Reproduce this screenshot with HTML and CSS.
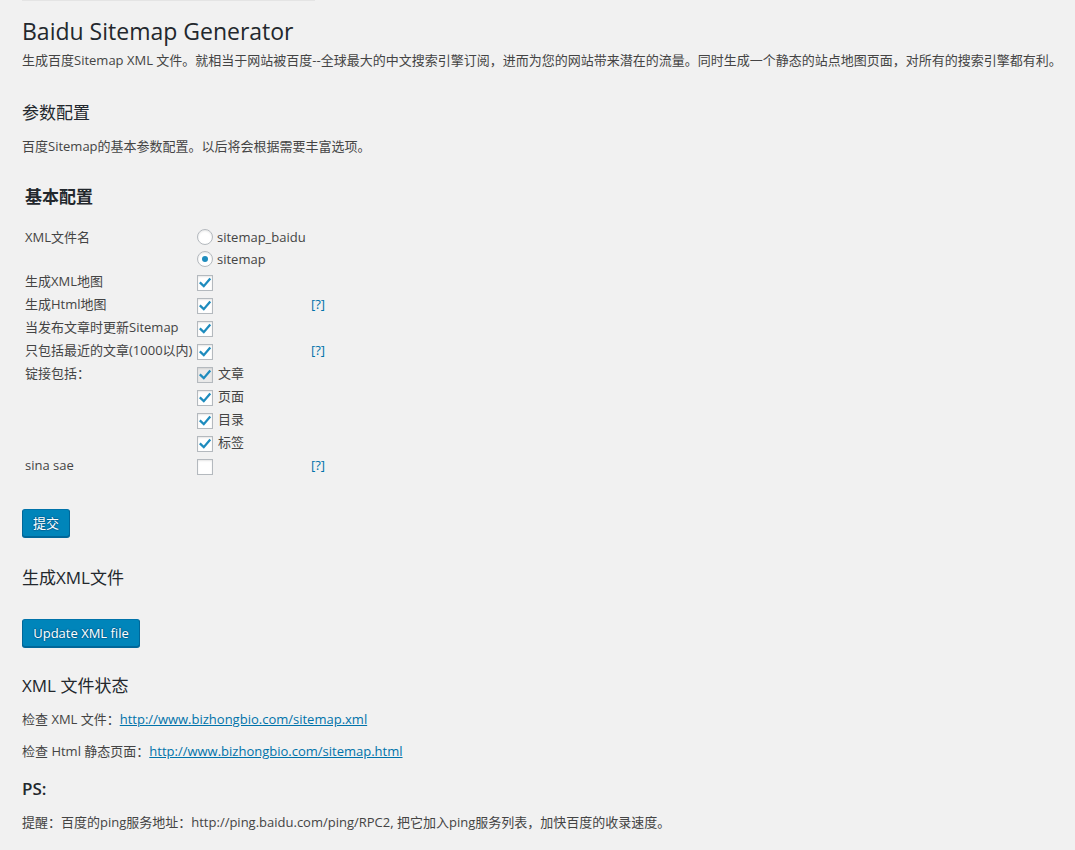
FILE: index.html
```html
<!DOCTYPE html>
<html lang="zh-CN">
<head>
<meta charset="utf-8">
<title>Baidu Sitemap Generator</title>
<link rel="stylesheet" href="styles.css">
</head>
<body>
<div class="notice-edge"></div>
<div class="wrap">
  <h1 class="title">Baidu Sitemap Generator</h1>
  <p class="desc">生成百度Sitemap XML 文件。就相当于网站被百度--全球最大的中文搜索引擎订阅，进而为您的网站带来潜在的流量。同时生成一个静态的站点地图页面，对所有的搜索引擎都有利。</p>

  <h2 class="section first">参数配置</h2>
  <p class="intro">百度Sitemap的基本参数配置。以后将会根据需要丰富选项。</p>

  <h3 class="group">基本配置</h3>

  <div class="form">
    <div class="row">
      <div class="label">XML文件名</div>
      <div class="ctrl">
        <div class="radio-line"><span class="radio"></span><span class="opt">sitemap_baidu</span></div>
        <div class="radio-line"><span class="radio on"></span><span class="opt">sitemap</span></div>
      </div>
      <div class="help"></div>
    </div>
    <div class="row">
      <div class="label">生成XML地图</div>
      <div class="ctrl"><div class="cb-line"><span class="cb checked"><svg viewBox="0 0 16 16"><path d="M3 8.2 L6.6 11.6 L13.2 3.8" /></svg></span></div></div>
      <div class="help"></div>
    </div>
    <div class="row">
      <div class="label">生成Html地图</div>
      <div class="ctrl"><div class="cb-line"><span class="cb checked"><svg viewBox="0 0 16 16"><path d="M3 8.2 L6.6 11.6 L13.2 3.8" /></svg></span></div></div>
      <div class="help"><a class="q">[?]</a></div>
    </div>
    <div class="row">
      <div class="label">当发布文章时更新Sitemap</div>
      <div class="ctrl"><div class="cb-line"><span class="cb checked"><svg viewBox="0 0 16 16"><path d="M3 8.2 L6.6 11.6 L13.2 3.8" /></svg></span></div></div>
      <div class="help"></div>
    </div>
    <div class="row">
      <div class="label">只包括最近的文章(1000以内)</div>
      <div class="ctrl"><div class="cb-line"><span class="cb checked"><svg viewBox="0 0 16 16"><path d="M3 8.2 L6.6 11.6 L13.2 3.8" /></svg></span></div></div>
      <div class="help"><a class="q">[?]</a></div>
    </div>
    <div class="row">
      <div class="label">锭接包括：</div>
      <div class="ctrl">
        <div class="cb-line"><span class="cb checked disabled"><svg viewBox="0 0 16 16"><path d="M3 8.2 L6.6 11.6 L13.2 3.8" /></svg></span><span class="opt">文章</span></div>
        <div class="cb-line"><span class="cb checked"><svg viewBox="0 0 16 16"><path d="M3 8.2 L6.6 11.6 L13.2 3.8" /></svg></span><span class="opt">页面</span></div>
        <div class="cb-line"><span class="cb checked"><svg viewBox="0 0 16 16"><path d="M3 8.2 L6.6 11.6 L13.2 3.8" /></svg></span><span class="opt">目录</span></div>
        <div class="cb-line"><span class="cb checked"><svg viewBox="0 0 16 16"><path d="M3 8.2 L6.6 11.6 L13.2 3.8" /></svg></span><span class="opt">标签</span></div>
      </div>
      <div class="help"></div>
    </div>
    <div class="row">
      <div class="label">sina sae</div>
      <div class="ctrl"><div class="cb-line"><span class="cb"></span></div></div>
      <div class="help"><a class="q">[?]</a></div>
    </div>
  </div>

  <div class="btn-row submit-row"><button class="button">提交</button></div>

  <h2 class="section gen">生成XML文件</h2>
  <div class="btn-row update-row"><button class="button">Update XML file</button></div>

  <h2 class="section status">XML 文件状态</h2>
  <p class="line check1">检查 XML 文件：<a href="#">http://www.bizhongbio.com/sitemap.xml</a></p>
  <p class="line check2">检查 Html 静态页面：<a href="#">http://www.bizhongbio.com/sitemap.html</a></p>

  <h3 class="ps">PS:</h3>
  <p class="line tip">提醒：百度的ping服务地址：http://ping.baidu.com/ping/RPC2, 把它加入ping服务列表，加快百度的收录速度。</p>
</div>
</body>
</html>
```

FILE: styles.css
```css
html, body {
  margin: 0;
  padding: 0;
}
body {
  background: #f1f1f1;
  color: #444;
  font-family: "Open Sans", "Noto Sans CJK SC", sans-serif;
  font-size: 13px;
  line-height: 19.5px;
}
.notice-edge {
  margin-left: 22px;
  width: 293px;
  height: 1px;
  background: #e4e4e4;
}
.wrap {
  padding: 0 18px 0 22px;
}
.title {
  margin: 0;
  padding: 16px 0 5px;
  font-size: 23px;
  line-height: 29px;
  font-weight: 400;
  color: #23282d;
}
.desc {
  margin: 0;
  white-space: nowrap;
}
.section {
  margin: 0;
  font-size: 17px;
  line-height: 24px;
  font-weight: 400;
  color: #23282d;
}
.section.first {
  margin-top: 30px;
}
.intro {
  margin: 12px 0 0;
}
.group {
  margin: 29px 0 0;
  padding-left: 3px;
  font-size: 17px;
  line-height: 24px;
  font-weight: 700;
  color: #23282d;
}
.form {
  margin: 17px 0 0 3px;
  display: flex;
  flex-direction: column;
}
.row {
  display: grid;
  grid-template-columns: 172px 114px auto;
  line-height: 23px;
}
.label {
  color: #444;
  white-space: nowrap;
}
.ctrl {
  display: flex;
  flex-direction: column;
}
.radio-line {
  height: 22px;
  line-height: 22px;
  display: flex;
  align-items: flex-start;
}
.cb-line {
  height: 23px;
  display: flex;
  align-items: flex-start;
}
.radio {
  width: 14px;
  height: 14px;
  margin-top: 3px;
  border: 1px solid #b4b9be;
  border-radius: 50%;
  background: #fff;
  box-shadow: inset 0 1px 2px rgba(0, 0, 0, 0.1);
  display: flex;
  align-items: center;
  justify-content: center;
  flex: none;
}
.radio.on::after {
  content: "";
  width: 6px;
  height: 6px;
  border-radius: 50%;
  background: #1e8cbe;
}
.cb {
  width: 14px;
  height: 14px;
  margin-top: 5px;
  border: 1px solid #b4b9be;
  background: #fff;
  box-shadow: inset 0 1px 2px rgba(0, 0, 0, 0.1);
  flex: none;
  display: block;
}
.cb.disabled {
  background: #eaeaea;
}
.cb svg {
  display: block;
  width: 14px;
  height: 14px;
}
.cb svg path {
  fill: none;
  stroke: #1e8cbe;
  stroke-width: 2.6;
  stroke-linecap: square;
  stroke-linejoin: miter;
}
.opt {
  margin-left: 5px;
  color: #444;
}
.radio-line .opt {
  margin-left: 4px;
}
.help {
  line-height: 23px;
}
.q {
  color: #0073aa;
  text-decoration: none;
}
.btn-row {
  display: flex;
}
.submit-row {
  margin-top: 32px;
}
.button {
  height: 28px;
  padding: 0 10px 1px;
  font-family: "Open Sans", "Noto Sans CJK SC", sans-serif;
  font-size: 13px;
  line-height: 26px;
  color: #fff;
  background: #0085ba;
  border: 1px solid;
  border-color: #0073aa #006799 #006799;
  border-radius: 3px;
  box-shadow: 0 1px 0 #006799;
  text-shadow: 0 -1px 1px #006799, 1px 0 1px #006799, 0 1px 1px #006799, -1px 0 1px #006799;
  cursor: pointer;
}
.submit-row .button {
  width: 48px;
  padding: 0;
}
.section.gen {
  margin-top: 29px;
}
.update-row {
  margin-top: 29px;
}
.update-row .button {
  width: 118px;
  padding: 0;
}
.section.status {
  margin-top: 27px;
}
.line {
  margin: 0;
}
.check1 {
  margin-top: 12px;
}
.check2 {
  margin-top: 12px;
}
.line a {
  color: #0073aa;
  text-decoration: underline;
}
.ps {
  margin: 16px 0 0;
  font-size: 17px;
  line-height: 24px;
  font-weight: 600;
  color: #23282d;
}
.tip {
  margin-top: 12px;
}
```
